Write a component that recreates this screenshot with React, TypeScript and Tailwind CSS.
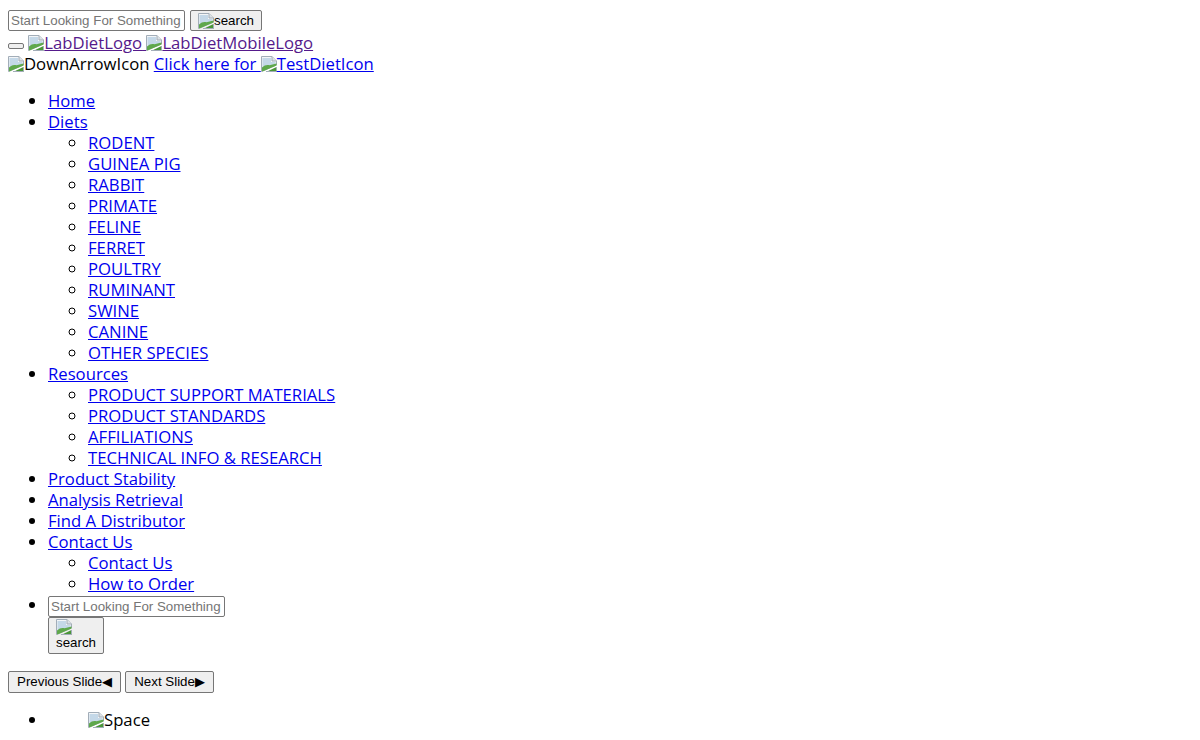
import React from "react";

const ctrlFont = { fontFamily: '"Liberation Sans", Arial, sans-serif' };

function BrokenIcon() {
  return (
    <svg
      width="16"
      height="16"
      viewBox="0 0 16 16"
      className="inline-block align-[-2px]"
      aria-hidden="true"
    >
      <path d="M0.5 0.5 H11 L15.5 5 V9 L0.5 15.5 Z" fill="#f3f5f7" stroke="#a2adb8" strokeWidth="1" />
      <path d="M11 0.5 V5 H15.5" fill="#dde2e6" stroke="#a2adb8" strokeWidth="1" />
      <path d="M1.5 2 H10 V6 H14.5 V8.5 L1.5 14 Z" fill="#c4d8e8" />
      <path d="M1 15 L1 11.5 C3.5 9 6 8.5 8.5 9.2 L15.5 7.5 L15.5 9.5 L1.5 15.5 Z" fill="#5fa84c" />
      <path d="M5 16 L15.5 11 V16 Z" fill="#4a9639" />
      <path d="M15.5 11 V15.5 H5" fill="none" stroke="#a2adb8" strokeWidth="1" />
    </svg>
  );
}

function BrokenImg({ alt }: { alt: string }) {
  return (
    <span>
      <BrokenIcon />
      {alt}
    </span>
  );
}

const btn =
  "bg-[#efefef] border border-[#767676] rounded-[2px] text-black text-[13.33px] leading-[16px] py-[1px]";
const inp =
  "border border-[#767676] rounded-[2px] text-[13.33px] leading-[16px] px-[2px] py-[1px] placeholder:text-[#757575] bg-white";

const link = "text-[#0000ee] underline";

const diets = [
  "RODENT",
  "GUINEA PIG",
  "RABBIT",
  "PRIMATE",
  "FELINE",
  "FERRET",
  "POULTRY",
  "RUMINANT",
  "SWINE",
  "CANINE",
  "OTHER SPECIES",
];
const resources = [
  "PRODUCT SUPPORT MATERIALS",
  "PRODUCT STANDARDS",
  "AFFILIATIONS",
  "TECHNICAL INFO & RESEARCH",
];

export default function App() {
  return (
    <div
      className="bg-white text-black text-[16.7px] leading-[21px] p-2 min-h-[740px]"
      style={{ fontFamily: '"Open Sans", "Noto Sans", sans-serif' }}
    >
      {/* top search */}
      <div className="flex items-start pt-[2px] gap-[5px] h-[24px]">
        <input
          className={`${inp} w-[177px] h-[21px]`}
          style={ctrlFont}
          placeholder="Start Looking For Something"
        />
        <button className={`${btn} px-[7px] h-[21px] flex items-center`} style={ctrlFont}>
          <BrokenIcon />
          search
        </button>
      </div>

      {/* logo row */}
      <div className="h-[21px] whitespace-nowrap">
        <span className="inline-block w-4 h-[6px] bg-[#efefef] border border-[#767676] rounded-[2px] align-baseline" />{" "}
        <a className="text-[#551a8b] underline" href="#">
          <BrokenImg alt="LabDietLogo" />{" "}
        </a>{" "}
        <a className="text-[#551a8b] underline" href="#">
          <BrokenImg alt="LabDietMobileLogo" />
        </a>
      </div>

      {/* test diet row */}
      <div className="h-[21px] whitespace-nowrap">
        <BrokenImg alt="DownArrowIcon" />{" "}
        <a className={link} href="#">
          Click here for <BrokenImg alt="TestDietIcon" />
        </a>
      </div>

      {/* nav */}
      <ul className="list-disc pl-10 my-4">
        <li>
          <a className={link} href="#">Home</a>
        </li>
        <li>
          <a className={link} href="#">Diets</a>
          <ul className="list-[circle] pl-10">
            {diets.map((d) => (
              <li key={d}>
                <a className={link} href="#">{d}</a>
              </li>
            ))}
          </ul>
        </li>
        <li>
          <a className={link} href="#">Resources</a>
          <ul className="list-[circle] pl-10">
            {resources.map((d) => (
              <li key={d}>
                <a className={link} href="#">{d}</a>
              </li>
            ))}
          </ul>
        </li>
        <li>
          <a className={link} href="#">Product Stability</a>
        </li>
        <li>
          <a className={link} href="#">Analysis Retrieval</a>
        </li>
        <li>
          <a className={link} href="#">Find A Distributor</a>
        </li>
        <li>
          <a className={link} href="#">Contact Us</a>
          <ul className="list-[circle] pl-10">
            <li>
              <a className={link} href="#">Contact Us</a>
            </li>
            <li>
              <a className={link} href="#">How to Order</a>
            </li>
          </ul>
        </li>
        <li>
          <div className="pt-[1px]">
            <input
              className={`${inp} w-[177px] h-[21px] block`}
              style={ctrlFont}
              placeholder="Start Looking For Something"
            />
          </div>
          <button
            className={`${btn} px-[7px] h-[37px] w-[56px] flex flex-col items-start`}
            style={ctrlFont}
          >
            <BrokenIcon />
            <span>search</span>
          </button>
        </li>
      </ul>

      {/* slider controls */}
      <div className="flex gap-1 h-[23px] items-start pt-[1px]">
        <button className={`${btn} px-[8px] h-[22px]`} style={ctrlFont}>
          Previous Slide◀
        </button>
        <button className={`${btn} px-[8px] h-[22px]`} style={ctrlFont}>
          Next Slide▶
        </button>
      </div>

      <ul className="list-disc pl-10 my-4">
        <li>
          <span className="inline-block ml-10">
            <BrokenImg alt="Space" />
          </span>
        </li>
      </ul>
    </div>
  );
}
